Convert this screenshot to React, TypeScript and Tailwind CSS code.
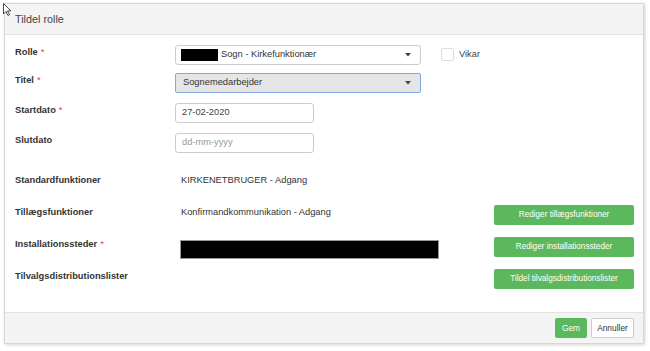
import React from 'react'

const font = { fontFamily: '"Liberation Sans", Arial, sans-serif' }

function Caret() {
  return (
    <svg width="6" height="4" viewBox="0 0 6 4" className="shrink-0">
      <path d="M0 0h6L3 3.5z" fill="#444" />
    </svg>
  )
}

function Label({ text, req }: { text: string; req?: boolean }) {
  return (
    <div className="w-[160px] shrink-0 pt-[1px] text-[9.3px] font-bold leading-[13px] text-[#333]">
      {text}
      {req && <span className="ml-[3px] font-normal text-[#e0474c]">*</span>}
    </div>
  )
}

function GreenButton({ children }: { children: React.ReactNode }) {
  return (
    <button className="h-[20px] w-[140px] shrink-0 rounded-[2px] bg-[#5cb85c] text-[8.2px] text-white">
      {children}
    </button>
  )
}

export default function App() {
  return (
    <div className="relative h-[351px] w-[650px] bg-white pl-[4px] pt-[3px]" style={font}>
      {/* mouse pointer */}
      <svg className="absolute left-[3px] top-[3px]" width="9" height="13" viewBox="0 0 9 13">
        <path d="M0.5 0.5v10.5l2.5-2.5 2 4 1.5-.8-2-3.8h3.5z" fill="#fff" stroke="#333" strokeWidth="0.9" strokeLinejoin="round" />
      </svg>

      <div className="flex h-[341px] w-[640px] flex-col border border-[#d6d6d6] shadow-[1px_1px_3px_rgba(0,0,0,0.18)]">
        <div className="flex h-[31px] shrink-0 items-center border-b border-[#e3e3e3] bg-[#f4f4f4] px-[10px] pt-[1px] text-[10.8px] text-[#444]">
          Tildel rolle
        </div>

        <div className="h-[277px] shrink-0 bg-white pl-[10px] pr-[9px] pt-[10px]">
          <div className="flex h-[28px] items-start">
            <Label text="Rolle" req />
            <div className="flex h-[20px] w-[246px] items-center rounded-[3px] border border-[#ccc] bg-white pl-[5px] pr-[9px]">
              <span className="h-[12px] w-[37px] bg-black" />
              <span className="ml-[3px] flex-1 text-[9.3px] text-[#333]">Sogn - Kirkefunktionær</span>
              <Caret />
            </div>
            <div className="ml-[20px] mt-[3px] flex items-center">
              <span className="h-[13px] w-[13px] rounded-[2px] border border-[#ddd] bg-white" />
              <span className="ml-[5px] text-[9.3px] leading-[13px] text-[#444]">Vikar</span>
            </div>
          </div>

          <div className="flex h-[30px] items-start">
            <Label text="Titel" req />
            <div className="flex h-[20px] w-[246px] items-center rounded-[2px] border border-[#80a8e0] bg-[#e6e6e6] pl-[7px] pr-[9px]">
              <span className="flex-1 text-[9.3px] text-[#333]">Sognemedarbejder</span>
              <Caret />
            </div>
          </div>

          <div className="flex h-[30px] items-start">
            <Label text="Startdato" req />
            <div className="flex h-[20px] w-[139px] items-center rounded-[3px] border border-[#ccc] px-[6px] text-[9.3px] text-[#444]">
              27-02-2020
            </div>
          </div>

          <div className="flex h-[40px] items-start">
            <Label text="Slutdato" />
            <div className="flex h-[20px] w-[139px] items-center rounded-[3px] border border-[#ccc] px-[6px] text-[9.3px] text-[#999]">
              dd-mm-yyyy
            </div>
          </div>

          <div className="flex h-[32px] items-start">
            <Label text="Standardfunktioner" />
            <div className="pl-[6px] pt-[1px] text-[9.3px] leading-[13px] text-[#333]">KIRKENETBRUGER - Adgang</div>
          </div>

          <div className="flex h-[32px] items-start">
            <Label text="Tillægsfunktioner" />
            <div className="flex-1 pl-[6px] pt-[1px] text-[9.3px] leading-[13px] text-[#333]">Konfirmandkommunikation - Adgang</div>
            <GreenButton>Rediger tillægsfunktioner</GreenButton>
          </div>

          <div className="flex h-[32px] items-start">
            <Label text="Installationssteder" req />
            <div className="flex-1 pl-[5px] pt-[3px]">
              <div className="h-[19px] w-[259px] border border-[#999] bg-black" />
            </div>
            <GreenButton>Rediger installationssteder</GreenButton>
          </div>

          <div className="flex h-[32px] items-start">
            <Label text="Tilvalgsdistributionslister" />
            <div className="flex-1" />
            <GreenButton>Tildel tilvalgsdistributionslister</GreenButton>
          </div>
        </div>

        <div className="flex flex-1 items-center justify-end gap-[4px] border-t border-[#e3e3e3] bg-[#f4f4f4] pr-[9px]">
          <button className="h-[20px] w-[32px] rounded-[2px] bg-[#5cb85c] text-[8.4px] text-white">Gem</button>
          <button className="h-[20px] w-[43px] rounded-[2px] border border-[#ccc] bg-white text-[8.4px] text-[#333]">Annuller</button>
        </div>
      </div>
    </div>
  )
}
